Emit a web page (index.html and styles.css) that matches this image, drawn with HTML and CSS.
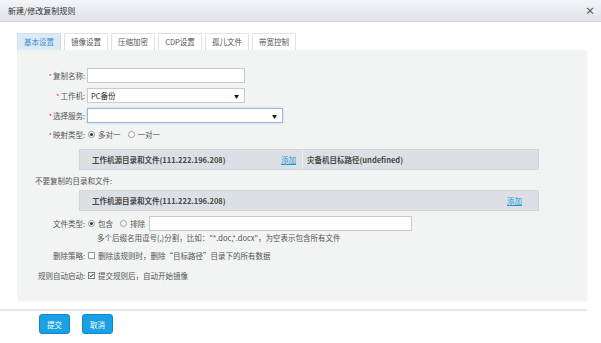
FILE: index.html
```html
<!DOCTYPE html>
<html>
<head>
<meta charset="utf-8">
<link rel="stylesheet" href="styles.css">
</head>
<body>
<div class="dialog">
  <div class="titlebar">
    <span class="title">新建/修改复制规则</span>
    <span class="close">×</span>
  </div>
  <div class="content">
    <div class="tabs">
      <span class="tab active">基本设置</span>
      <span class="tab">镜像设置</span>
      <span class="tab">压缩加密</span>
      <span class="tab">CDP设置</span>
      <span class="tab">孤儿文件</span>
      <span class="tab">带宽控制</span>
    </div>
    <div class="panel">
      <div class="row r1">
        <label class="lbl"><i class="req">*</i>复制名称:</label>
        <div class="input w158"></div>
      </div>
      <div class="row r2">
        <label class="lbl"><i class="req">*</i>工作机:</label>
        <div class="select w158"><span>PC备份</span><b class="arrow">▼</b></div>
      </div>
      <div class="row r2">
        <label class="lbl"><i class="req">*</i>选择服务:</label>
        <div class="select w196 focus"><span></span><b class="arrow">▼</b></div>
      </div>
      <div class="row r4">
        <label class="lbl"><i class="req">*</i>映射类型:</label>
        <span class="radio on"></span><span class="opt">多对一</span>
        <span class="radio"></span><span class="opt">一对一</span>
      </div>
      <div class="bar b1">
        <div class="bar-left"><span class="bt">工作机源目录和文件(111.222.196.208)</span><a class="link">添加</a></div>
        <div class="bar-right"><span class="bt">灾备机目标路径(undefined)</span></div>
      </div>
      <div class="row exclude">不要复制的目录和文件:</div>
      <div class="bar b2">
        <div class="bar-full"><span class="bt">工作机源目录和文件(111.222.196.208)</span><a class="link">添加</a></div>
      </div>
      <div class="row r6">
        <label class="lbl">文件类型:</label>
        <span class="radio on"></span><span class="opt">包含</span>
        <span class="radio"></span><span class="opt o2">排除</span>
        <div class="input w263"></div>
      </div>
      <div class="hint">多个后缀名用逗号(,)分割，比如："*.doc,*.docx"，为空表示包含所有文件</div>
      <div class="row r8">
        <label class="lbl">删除策略:</label>
        <span class="check"></span><span class="opt">删除该规则时，删除“目标路径”目录下的所有数据</span>
      </div>
      <div class="row r9">
        <label class="lbl">规则自动启动:</label>
        <span class="check on"><svg width="7" height="7" viewBox="0 0 7 7"><path d="M1 3.6 L2.8 5.4 L6 1.4" fill="none" stroke="#222" stroke-width="1.4"/></svg></span><span class="opt">提交规则后，自动开始镜像</span>
      </div>
    </div>
  </div>
  <div class="footer">
    <button class="btn">提交</button>
    <button class="btn">取消</button>
  </div>
</div>
</body>
</html>
```

FILE: styles.css
```css
* { box-sizing: border-box; }
html, body { margin: 0; padding: 0; background: #fff; }
body {
  font-family: "Noto Sans CJK SC", "Liberation Sans", sans-serif;
  font-size: 7.5px;
  color: #555;
}
.dialog { width: 601px; height: 343px; }
.titlebar {
  height: 22px;
  display: flex;
  align-items: center;
  justify-content: space-between;
  padding: 0 6px 0 8px;
  background: linear-gradient(#f3f5f8, #dfe3e9);
  border-bottom: 1px solid #d4d8de;
}
.title { color: #333; font-size: 8px; }
.close { color: #555; font-size: 10px; font-weight: bold; }
.content { padding: 11px 0 0 17px; width: 587px; }
.tabs { display: flex; gap: 3px; height: 17px; }
.tab {
  width: 44px;
  height: 17px;
  line-height: 15px;
  text-align: center;
  border: 1px solid #e2e2e2;
  border-bottom: none;
  background: #fff;
  color: #555;
  font-size: 7.5px;
}
.tab.active { background: #dceaf6; color: #3a8fd0; border-color: #cfdeec; }
.panel {
  background: #f2f3f3;
  width: 569px;
  height: 250px;
  padding-top: 18px;
  box-shadow: 1px 1px 2px rgba(0,0,0,0.06);
}
.row { display: flex; align-items: center; }
.lbl { width: 70px; text-align: right; padding-right: 2px; color: #555; }
.req { color: #e33; font-style: normal; font-size: 7px; margin-right: 1px; }
.input, .select {
  height: 15px;
  background: #fff;
  border: 1px solid #c9c9c9;
}
.w158 { width: 158px; }
.w196 { width: 196px; }
.w263 { width: 263px; }
.select { display: flex; align-items: center; justify-content: space-between; padding: 0 5px 0 3px; color: #222; }
.select.focus { border-color: #9cb6dd; box-shadow: 0 0 2px #b9cdee; }
.arrow { font-size: 5px; color: #111; font-weight: normal; }
.r2 { margin-top: 5px; }
.r4 { margin-top: 4px; height: 14px; }
.radio {
  width: 7px; height: 7px; border-radius: 50%;
  border: 1px solid #9a9a9a; background: #fff;
  margin: 0 3px 0 1px; position: relative;
}
.radio.on::after {
  content: ""; position: absolute; left: 1px; top: 1px;
  width: 3px; height: 3px; border-radius: 50%; background: #333;
}
.opt { margin-right: 6px; color: #555; }
.bar {
  margin-left: 62px;
  width: 460px;
  height: 21px;
  background: #dcdfe3;
  border: 1px solid #d3d6da;
  display: flex;
}
.b1 { margin-top: 8px; }
.bar-left { width: 223px; display: flex; align-items: center; justify-content: space-between; padding: 0 6px 0 12px; border-right: 1px solid #eef0f2; }
.bar-right { flex: 1; display: flex; align-items: center; padding-left: 4px; }
.bar-full { flex: 1; display: flex; align-items: center; justify-content: space-between; padding: 0 16px 0 12px; }
.bt { font-weight: bold; color: #4a4a4a; }
.link { color: #1a9ad6; text-decoration: underline; }
.exclude { padding-left: 18px; height: 20px; margin-top: 0; color: #555; }
.b2 { margin-top: 0; }
.r6 { margin-top: 5px; }
.o2 { margin-right: 4px; }
.hint { padding-left: 80px; margin-top: 1px; height: 12px; line-height: 12px; color: #555; }
.r8 { margin-top: 4px; height: 14px; }
.r9 { margin-top: 6px; height: 14px; }
.check {
  width: 7px; height: 7px; border: 1px solid #999; background: #fff;
  margin: 0 3px 0 1px; display: flex; align-items: center; justify-content: center;
}
.check.on { border-color: #777; }
.check svg { display: block; }
.footer {
  margin-top: 9px;
  width: 587px;
  border-top: 2px solid #e8e8e8;
  padding: 3px 0 0 39px;
  display: flex;
  gap: 12px;
}
.btn {
  width: 31px; height: 20px;
  background: #1aa0e4;
  border: 1px solid #0d87c8;
  border-radius: 3px;
  color: #fff;
  font-family: "Noto Sans CJK SC", sans-serif;
  font-size: 7.5px;
  padding: 0;
}
```
